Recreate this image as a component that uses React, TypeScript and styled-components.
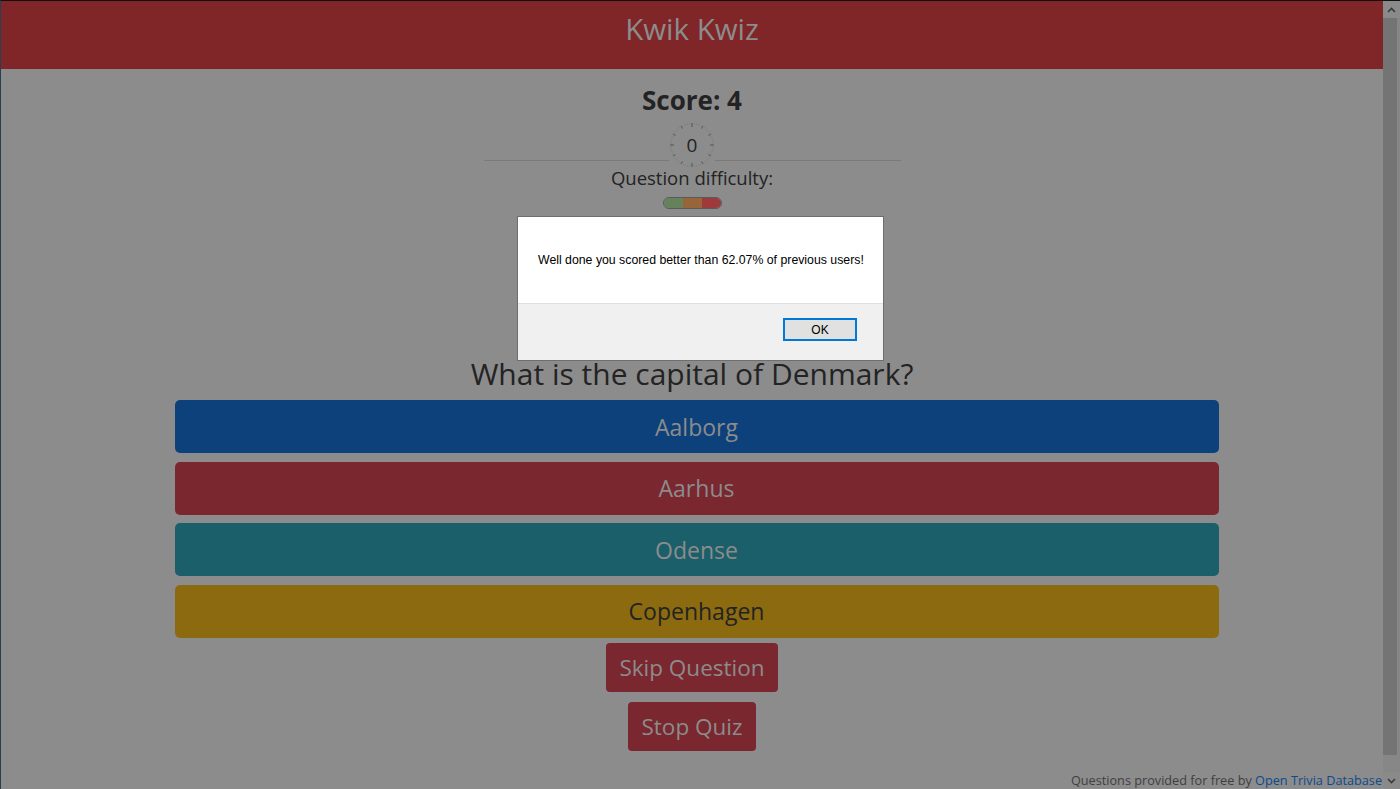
import React from "react";
import styled, { createGlobalStyle } from "styled-components";

const Global = createGlobalStyle`
  html, body { margin: 0; padding: 0; height: 100%; overflow: hidden; }
  body { background: #8c8c8c; font-family: "Open Sans", "Noto Sans", sans-serif; }
  #root { height: 100%; }
`;

const Window = styled.div`
  display: flex;
  height: 789px;
  width: 1400px;
  box-sizing: border-box;
  border-top: 1px solid #111;
  border-left: 1px solid #26404f;
  background: #8c8c8c;
  position: relative;
`;

const Page = styled.div`
  flex: 1;
  display: flex;
  flex-direction: column;
  align-items: center;
  min-width: 0;
`;

const Header = styled.header`
  align-self: stretch;
  height: 68px;
  background: #802528;
  display: flex;
  align-items: center;
  justify-content: center;
`;

const Title = styled.h1`
  margin: 0 0 14px 0;
  font-weight: 400;
  font-size: 29.5px;
  color: #8c8c8c;
`;

const Score = styled.h2`
  margin: 15px 0 0 0;
  font-size: 26px;
  font-weight: 700;
  color: #232323;
  line-height: 32px;
`;

const TimerRow = styled.div`
  position: relative;
  width: 417px;
  height: 46px;
  display: flex;
  justify-content: center;
  align-items: center;
  margin-top: 6px;
  &::before {
    content: "";
    position: absolute;
    left: 0;
    right: 0;
    top: 38px;
    border-top: 1px solid #7a7a7a;
  }
`;

const Clock = styled.div`
  position: relative;
  width: 46px;
  height: 46px;
  background: #8c8c8c;
  display: flex;
  align-items: center;
  justify-content: center;
  font-size: 19px;
  color: #232323;
  & svg { position: absolute; inset: 0; }
  & span { position: relative; }
`;

const DiffLabel = styled.div`
  font-size: 18.5px;
  color: #232323;
  margin-top: -3px;
  line-height: 26px;
`;

const DiffBar = styled.div`
  display: flex;
  width: 57px;
  height: 10px;
  border: 1px solid #5a5a5a;
  border-radius: 6px;
  overflow: hidden;
  margin-top: 6px;
`;

const Seg = styled.div<{ $c: string }>`
  flex: 1;
  background: ${(p) => p.$c};
`;

const Question = styled.h2`
  margin: 145px 0 0 0;
  font-weight: 400;
  font-size: 30px;
  color: #232323;
  line-height: 40px;
`;

const Answers = styled.div`
  width: 1044px;
  margin-left: 9px;
  display: flex;
  flex-direction: column;
  gap: 8.5px;
  margin-top: 6px;
`;

const Answer = styled.button<{ $bg: string; $fg: string }>`
  height: 53px;
  border: none;
  border-radius: 5px;
  background: ${(p) => p.$bg};
  color: ${(p) => p.$fg};
  font-family: inherit;
  font-size: 23px;
  padding: 0;
`;

const Action = styled.button`
  border: none;
  border-radius: 4px;
  background: #7a2730;
  color: #8c8c8c;
  font-family: inherit;
  font-size: 22.5px;
  height: 49px;
  padding: 0 13px;
  margin-top: 5px;
  & + & { margin-top: 10px; }
`;

const Footer = styled.div`
  align-self: stretch;
  margin-top: auto;
  text-align: right;
  font-size: 12.7px;
  color: #3f3f3f;
  padding-right: 1px;
  line-height: 17px;
  & a { color: #0d4a8c; text-decoration: none; }
`;

const Scrollbar = styled.div`
  width: 17px;
  display: flex;
  flex-direction: column;
  background: #878787;
`;

const ScrollBtn = styled.div`
  height: 17px;
  display: flex;
  align-items: center;
  justify-content: center;
  background: #8a8a8a;
`;

const Thumb = styled.div`
  height: 737px;
  margin-right: 3px;
  background: #747474;
`;

const Track = styled.div`
  flex: 1;
`;

const Dialog = styled.div`
  position: absolute;
  left: 516px;
  top: 215px;
  width: 365px;
  height: 143px;
  border: 1px solid #6e6e6e;
  display: flex;
  flex-direction: column;
  font-family: "Liberation Sans", Arial, sans-serif;
`;

const DialogBody = styled.div`
  height: 86px;
  background: #fff;
  border-bottom: 1px solid #dfdfdf;
  display: flex;
  align-items: center;
  padding-left: 20px;
  font-size: 12.3px;
  color: #000;
`;

const DialogFoot = styled.div`
  flex: 1;
  background: #f0f0f0;
  display: flex;
  justify-content: flex-end;
  align-items: flex-start;
  padding: 14px 26px 0 0;
`;

const OkButton = styled.button`
  width: 74px;
  height: 23px;
  box-sizing: border-box;
  border: 2px solid #0078d7;
  background: #e1e1e1;
  font-family: "Liberation Sans", Arial, sans-serif;
  font-size: 12px;
  color: #000;
  padding: 0;
`;

const Arrow = ({ up }: { up?: boolean }) => (
  <svg width="9" height="6" viewBox="0 0 9 6">
    <path
      d={up ? "M1 5 L4.5 1.5 L8 5" : "M1 1 L4.5 4.5 L8 1"}
      fill="none"
      stroke="#3a3a3a"
      strokeWidth="1.6"
    />
  </svg>
);

const ClockFace = () => {
  const ticks = [];
  for (let i = 0; i < 60; i++) {
    const a = (i / 60) * Math.PI * 2;
    const quarter = i % 15 === 0;
    const five = i % 5 === 0;
    const r2 = 22;
    const r1 = quarter ? 18 : five ? 19 : 20.5;
    ticks.push(
      <line
        key={i}
        x1={23 + Math.sin(a) * r1}
        y1={23 - Math.cos(a) * r1}
        x2={23 + Math.sin(a) * r2}
        y2={23 - Math.cos(a) * r2}
        stroke={five ? "#555" : "#777"}
        strokeWidth={five ? 1 : 0.7}
      />
    );
  }
  return (
    <svg width="46" height="46" viewBox="0 0 46 46">
      {ticks}
    </svg>
  );
};

export default function App() {
  return (
    <>
      <Global />
      <Window>
        <Page>
          <Header>
            <Title>Kwik Kwiz</Title>
          </Header>
          <Score>Score: 4</Score>
          <TimerRow>
            <Clock>
              <ClockFace />
              <span>0</span>
            </Clock>
          </TimerRow>
          <DiffLabel>Question difficulty:</DiffLabel>
          <DiffBar>
            <Seg $c="#66825c" />
            <Seg $c="#98653a" />
            <Seg $c="#9e3a3c" />
          </DiffBar>
          <Question>What is the capital of Denmark?</Question>
          <Answers>
            <Answer $bg="#0d417b" $fg="#8c8c8c">Aalborg</Answer>
            <Answer $bg="#7a2730" $fg="#8c8c8c">Aarhus</Answer>
            <Answer $bg="#1a5f69" $fg="#8c8c8c">Odense</Answer>
            <Answer $bg="#8c6b10" $fg="#232323">Copenhagen</Answer>
          </Answers>
          <Action>Skip Question</Action>
          <Action>Stop Quiz</Action>
          <Footer>
            Questions provided for free by <a href="#">Open Trivia Database</a>
          </Footer>
        </Page>
        <Scrollbar>
          <ScrollBtn>
            <Arrow up />
          </ScrollBtn>
          <Thumb />
          <Track />
          <ScrollBtn>
            <Arrow />
          </ScrollBtn>
        </Scrollbar>
        <Dialog>
          <DialogBody>Well done you scored better than 62.07% of previous users!</DialogBody>
          <DialogFoot>
            <OkButton>OK</OkButton>
          </DialogFoot>
        </Dialog>
      </Window>
    </>
  );
}
